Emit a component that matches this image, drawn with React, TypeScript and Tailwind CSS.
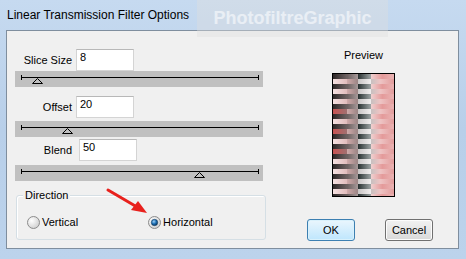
import React from 'react';

// rows of the preview strip, even = dark phase, odd = light phase
const previewRows = Array.from({ length: 25 }, (_, i) => i);

const Preview: React.FC = () => (
  <svg width="61" height="122" viewBox="0 0 61 122" className="block">
    <defs>
      <linearGradient id="a1" x1="0" x2="1">
        <stop offset="0" stopColor="#2e2828" />
        <stop offset="1" stopColor="#6e6262" />
      </linearGradient>
      <linearGradient id="a2" x1="0" x2="1">
        <stop offset="0" stopColor="#6a5e5e" />
        <stop offset="1" stopColor="#a89a9a" />
      </linearGradient>
      <linearGradient id="a3" x1="0" x2="1">
        <stop offset="0" stopColor="#c8c4c4" />
        <stop offset="1" stopColor="#f2eeee" />
      </linearGradient>
      <linearGradient id="a4" x1="0" x2="1">
        <stop offset="0" stopColor="#f0d0d0" />
        <stop offset="0.5" stopColor="#e49a9a" />
        <stop offset="1" stopColor="#eab4b4" />
      </linearGradient>
      <linearGradient id="b1" x1="0" x2="1">
        <stop offset="0" stopColor="#f6e2e2" />
        <stop offset="1" stopColor="#e2bcbc" />
      </linearGradient>
      <linearGradient id="b2" x1="0" x2="1">
        <stop offset="0" stopColor="#d0aaaa" />
        <stop offset="1" stopColor="#9a8484" />
      </linearGradient>
      <linearGradient id="b3" x1="0" x2="1">
        <stop offset="0" stopColor="#283030" />
        <stop offset="1" stopColor="#9ea4a4" />
      </linearGradient>
      <linearGradient id="b4" x1="0" x2="1">
        <stop offset="0" stopColor="#c8c0c0" />
        <stop offset="0.4" stopColor="#eec4c4" />
        <stop offset="1" stopColor="#e29c9c" />
      </linearGradient>
      <linearGradient id="r1" x1="0" x2="1">
        <stop offset="0" stopColor="#c85454" />
        <stop offset="1" stopColor="#a07070" />
      </linearGradient>
    </defs>
    {previewRows.map((i) => {
      const y = i * 5;
      const dark = i % 2 === 0;
      const red = i === 7 || i === 11 || i === 15;
      return (
        <g key={i}>
          <rect x="0" y={y} width="14" height="5" fill={red ? 'url(#r1)' : dark ? 'url(#a1)' : 'url(#b1)'} />
          <rect x="14" y={y} width="11" height="5" fill={dark ? 'url(#a2)' : 'url(#b2)'} />
          <rect x="25" y={y} width="13" height="5" fill={dark ? 'url(#b3)' : 'url(#a3)'} />
          <rect x="38" y={y} width="23" height="5" fill={dark ? 'url(#a4)' : 'url(#b4)'} />
        </g>
      );
    })}
  </svg>
);

const Slider: React.FC<{ pos: number; className?: string }> = ({ pos, className }) => (
  <div className={`relative h-[16px] w-[248px] bg-[#c0c0c0] ${className ?? ''}`}>
    <div className="absolute left-[6px] top-[6px] h-px w-[238px] bg-black" />
    <div className="absolute left-[6px] top-[4px] h-[5px] w-px bg-black" />
    <div className="absolute left-[243px] top-[4px] h-[5px] w-px bg-black" />
    <svg className="absolute top-[7px]" style={{ left: pos - 5 }} width="11" height="6" viewBox="0 0 11 6">
      <path d="M5.5 0.5 L10.5 5.5 L0.5 5.5 Z" fill="#c0c0c0" stroke="#000" strokeWidth="1" />
    </svg>
  </div>
);

const Field: React.FC<{ label: string; value: string; shift?: boolean; className?: string }> = ({
  label,
  value,
  shift,
  className,
}) => (
  <div className={`flex items-center ${className ?? ''}`}>
    <span className="w-[57px] text-right text-[11px] leading-[13px]">{label}</span>
    <div
      className={`h-[22px] w-[58px] bg-white border border-[#d4d4d4] border-t-[#b8b8b8] pl-[3px] text-[11px] leading-[14px] ${
        shift ? 'ml-[7px]' : 'ml-[4px]'
      }`}
    >
      {value}
    </div>
  </div>
);

const Radio: React.FC<{ checked?: boolean }> = ({ checked }) => (
  <svg width="13" height="13" viewBox="0 0 13 13">
    <defs>
      <radialGradient id={checked ? 'rc' : 'ru'} cx="0.35" cy="0.35" r="0.7">
        <stop offset="0" stopColor="#ffffff" />
        <stop offset="1" stopColor="#d0d0d0" />
      </radialGradient>
      <radialGradient id="dot" cx="0.4" cy="0.35" r="0.6">
        <stop offset="0" stopColor="#9fd0f5" />
        <stop offset="0.6" stopColor="#1b6fb6" />
        <stop offset="1" stopColor="#0c3f6e" />
      </radialGradient>
    </defs>
    <circle cx="6.5" cy="6.5" r="6" fill={checked ? 'url(#rc)' : 'url(#ru)'} stroke="#8c8c8c" />
    {checked && <circle cx="6.5" cy="6.5" r="3.2" fill="url(#dot)" stroke="#1a3e62" strokeWidth="0.6" />}
  </svg>
);

const Button: React.FC<{ label: string; primary?: boolean }> = ({ label, primary }) => (
  <div
    className={`flex h-[22px] w-[48px] items-center justify-center rounded-[3px] border text-[11px] ${
      primary
        ? 'border-[#3c7fb1] bg-gradient-to-b from-[#eaf6fd] to-[#bee6fd] shadow-[inset_0_0_0_1px_#d9f1fc]'
        : 'border-[#707070] bg-gradient-to-b from-[#f2f2f2] to-[#d9d9d9] shadow-[inset_0_0_0_1px_#fcfcfc]'
    }`}
  >
    {label}
  </div>
);

export default function App() {
  return (
    <div className="relative h-[259px] w-[466px] overflow-hidden bg-gradient-to-b from-[#c6daf0] via-[#b8cfe9] to-[#bcd3ec] font-['Liberation_Sans',Arial,sans-serif] text-black">
      <div className="flex h-[30px] items-center pl-[7px] text-[12px]">Linear Transmission Filter Options</div>

      <div className="ml-[6px] flex h-[219px] w-[453px] border border-[#7f8e9e] bg-[#f0f0f0]">
        {/* controls */}
        <div className="flex w-[262px] flex-col pl-[8px] pt-[18px]">
          <Field label="Slice Size" value="8" />
          <Slider pos={22} />
          <Field label="Offset" value="20" className="mt-[9px]" />
          <Slider pos={52} className="mt-[3px]" />
          <Field label="Blend" value="50" shift className="mt-[2px]" />
          <Slider pos={184} className="mt-[4px]" />

          <div className="relative ml-px mt-[14px] h-[45px] w-[250px] rounded-[3px] border border-[#d5dfe5] shadow-[inset_1px_1px_0_#ffffff]">
            <span className="absolute -top-[8px] left-[6px] bg-[#f0f0f0] px-[2px] text-[11px] leading-[14px]">
              Direction
            </span>
            <div className="flex items-center pl-[10px] pt-[18px] text-[11px]">
              <Radio />
              <span className="ml-[2px]">Vertical</span>
              <div className="ml-[70px] flex items-center">
                <Radio checked />
                <span className="ml-[2px]">Horizontal</span>
              </div>
            </div>
          </div>
        </div>

        {/* preview + buttons */}
        <div className="flex flex-1 flex-col pt-[18px]">
          <div className="text-center text-[11px] leading-[13px]">Preview</div>
          <div className="mx-auto mt-[11px] h-[124px] w-[63px] border border-black">
            <Preview />
          </div>
          <div className="mt-[22px] flex gap-[30px] pl-[38px]">
            <Button label="OK" primary />
            <Button label="Cancel" />
          </div>
        </div>
      </div>

      {/* watermark */}
      <div className="absolute left-[197px] top-0 flex h-[37px] w-[191px] items-center justify-center bg-[rgba(222,222,222,0.4)]">
        <span className="text-[18px] font-bold text-white/55">PhotofiltreGraphic</span>
      </div>

      {/* red arrow */}
      <svg className="absolute left-0 top-0" width="466" height="259" viewBox="0 0 466 259">
        <line x1="108" y1="190" x2="137" y2="207" stroke="#e8211d" strokeWidth="3" strokeLinecap="round" />
        <path d="M147 213 L131 210 L138 201 Z" fill="#e8211d" />
      </svg>
    </div>
  );
}
